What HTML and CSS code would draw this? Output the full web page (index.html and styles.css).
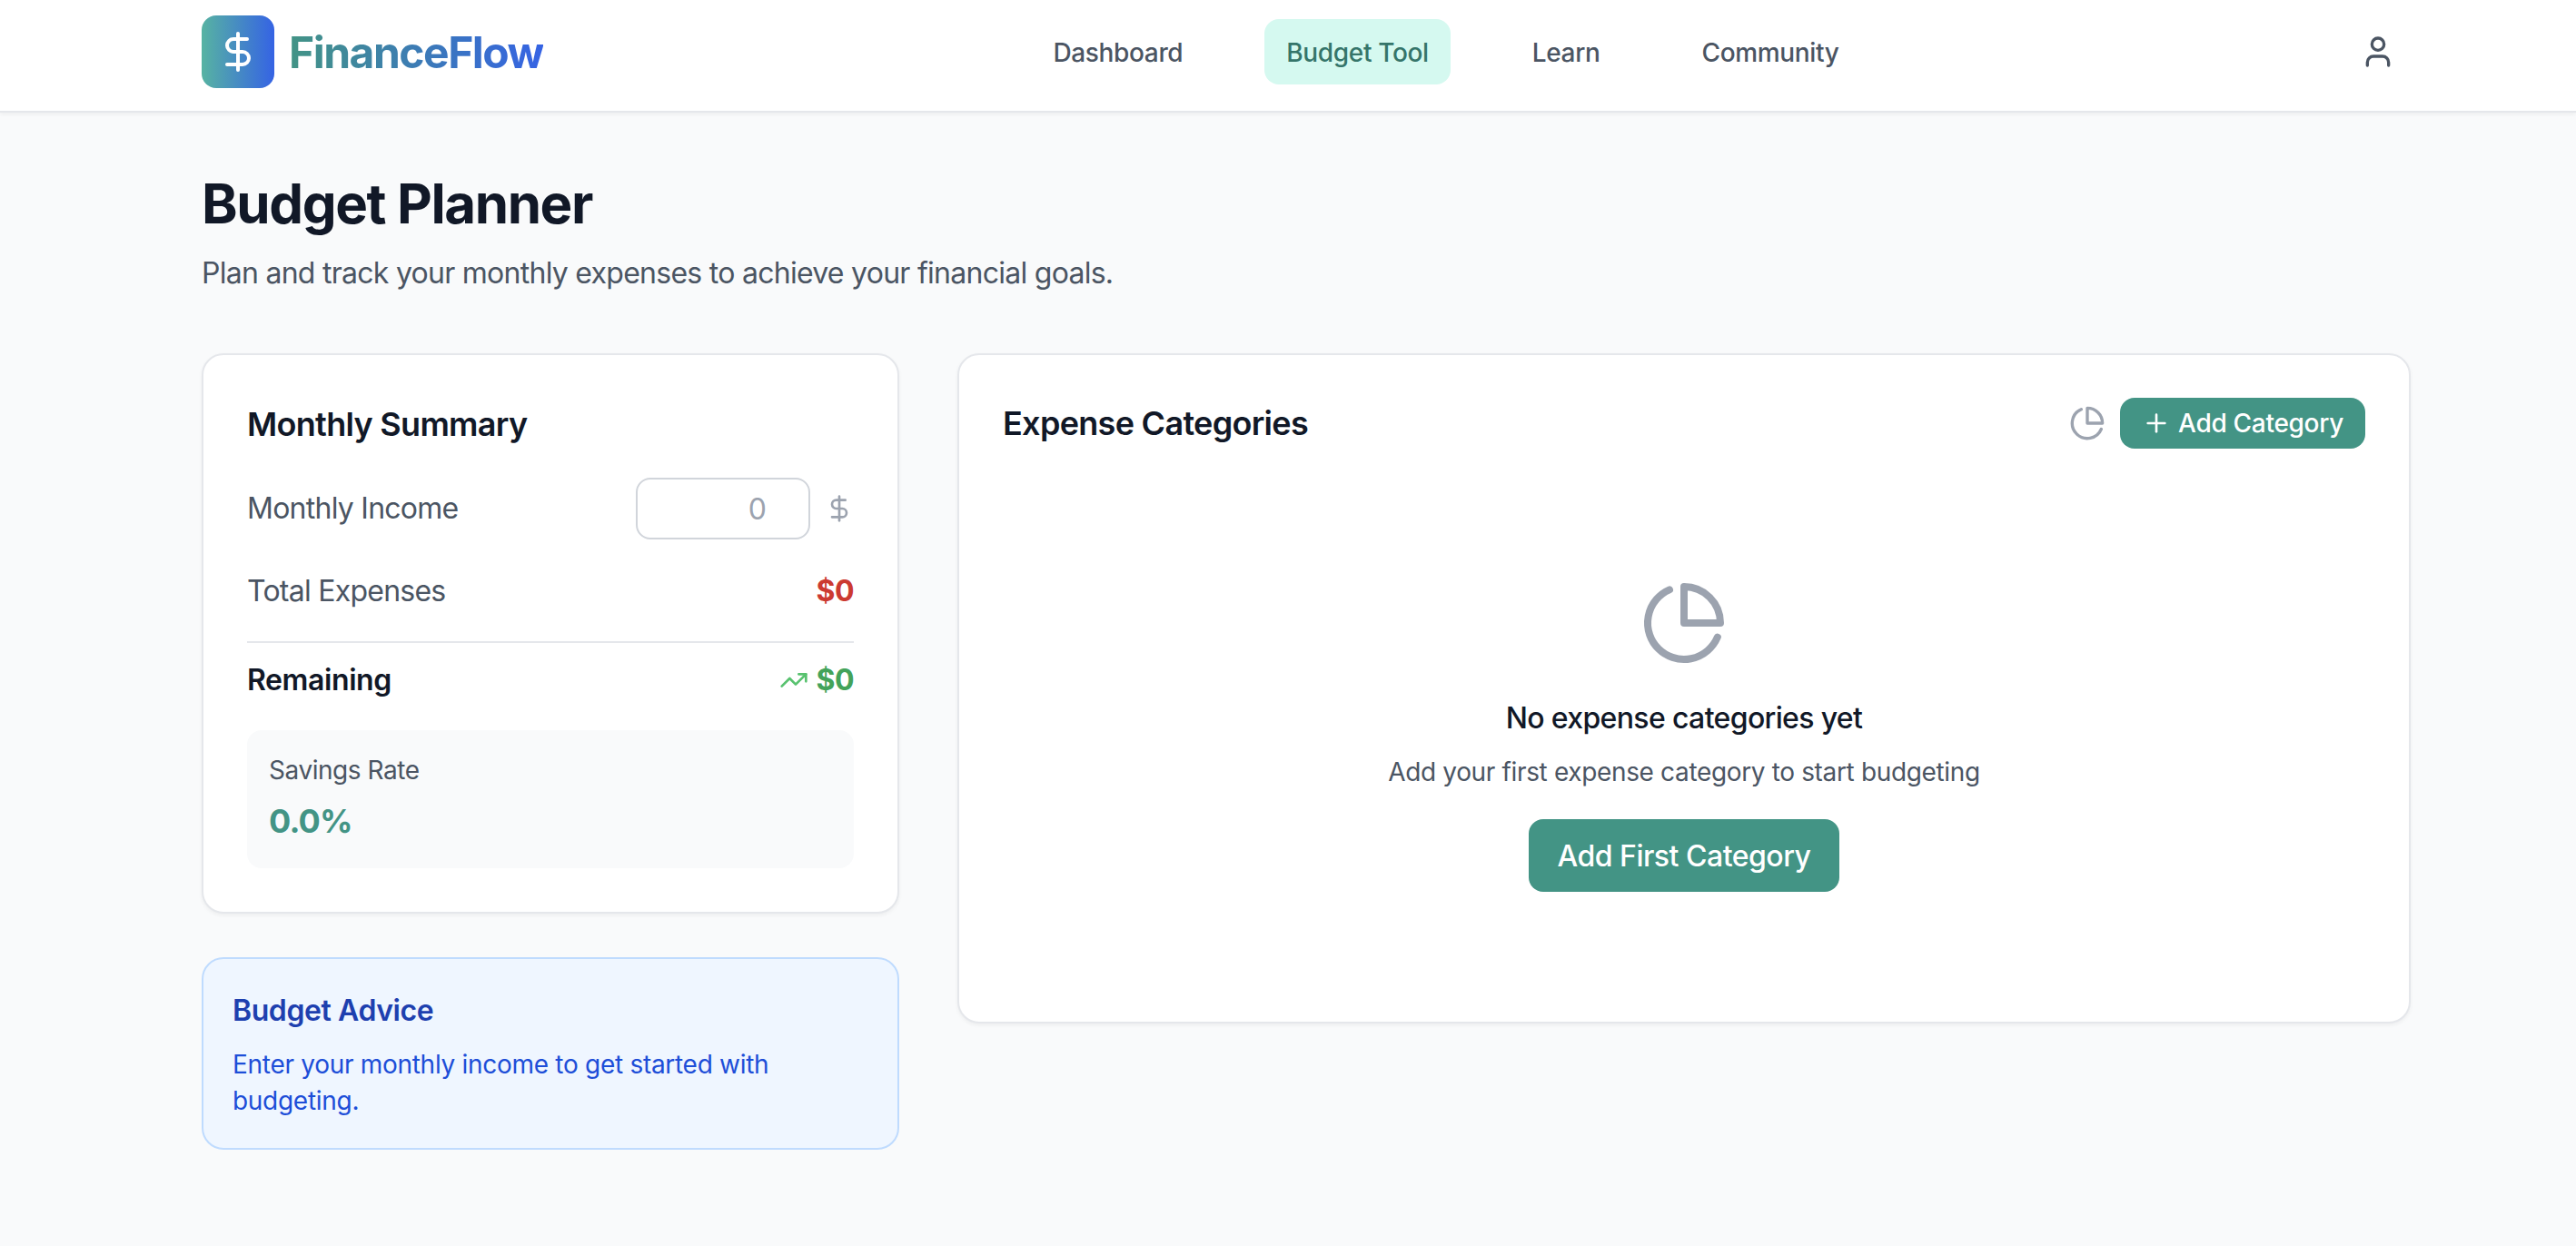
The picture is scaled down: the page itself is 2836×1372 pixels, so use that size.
FILE: index.html
```html
<!DOCTYPE html>
<html lang="en">
<head>
    <meta charset="UTF-8">
    <meta name="viewport" content="width=device-width, initial-scale=1.0">
    <title>Budget Planner</title>
    <link rel="stylesheet" href="styles.css">
</head>
<body>
    <header class="site-header">
        <a class="brand" href="#">
            <span class="brand-mark">
                <svg class="icon" width="48" height="48" viewBox="0 0 24 24"><line x1="12" y1="2" x2="12" y2="22"/><path d="M17 5H9.5a3.5 3.5 0 0 0 0 7h5a3.5 3.5 0 0 1 0 7H6"/></svg>
            </span>
            <span class="brand-name">FinanceFlow</span>
        </a>
        <nav class="main-nav">
            <a href="#">Dashboard</a>
            <a href="#" class="active">Budget Tool</a>
            <a href="#">Learn</a>
            <a href="#">Community</a>
        </nav>
        <button class="user-button" type="button" aria-label="Account">
            <svg class="icon" width="40" height="40" viewBox="0 0 24 24"><path d="M19 21v-2a4 4 0 0 0-4-4H9a4 4 0 0 0-4 4v2"/><circle cx="12" cy="7" r="4"/></svg>
        </button>
    </header>

    <main class="page">
        <h1>Budget Planner</h1>
        <p class="page-intro">Plan and track your monthly expenses to achieve your financial goals.</p>

        <div class="planner-grid">
            <div class="side-column">
                <section class="card summary-card">
                    <h2>Monthly Summary</h2>
                    <div class="row income-row">
                        <label for="income">Monthly Income</label>
                        <div class="income-field">
                            <input type="text" id="income" placeholder="0">
                            <svg class="icon" width="32" height="32" viewBox="0 0 24 24"><line x1="12" y1="2" x2="12" y2="22"/><path d="M17 5H9.5a3.5 3.5 0 0 0 0 7h5a3.5 3.5 0 0 1 0 7H6"/></svg>
                        </div>
                    </div>
                    <div class="row expenses-row">
                        <span>Total Expenses</span>
                        <strong class="amount-red">$0</strong>
                    </div>
                    <div class="row remaining-row">
                        <span>Remaining</span>
                        <strong class="amount-green">
                            <svg class="icon" width="32" height="32" viewBox="0 0 24 24"><polyline points="22 7 13.5 15.5 8.5 10.5 2 17"/><polyline points="16 7 22 7 22 13"/></svg>
                            $0
                        </strong>
                    </div>
                    <div class="savings-box">
                        <div class="savings-label">Savings Rate</div>
                        <div class="savings-value">0.0%</div>
                    </div>
                </section>

                <section class="advice-card">
                    <h3>Budget Advice</h3>
                    <p>Enter your monthly income to get started with budgeting.</p>
                </section>
            </div>

            <section class="card categories-card">
                <div class="categories-header">
                    <h2>Expense Categories</h2>
                    <div class="categories-actions">
                        <svg class="icon pie-small" width="40" height="40" viewBox="0 0 24 24"><path d="M21.21 15.89A10 10 0 1 1 8 2.83"/><path d="M22 12A10 10 0 0 0 12 2v10z"/></svg>
                        <button class="btn btn-small" type="button">
                            <svg class="icon" width="32" height="32" viewBox="0 0 24 24"><line x1="12" y1="5" x2="12" y2="19"/><line x1="5" y1="12" x2="19" y2="12"/></svg>
                            Add Category
                        </button>
                    </div>
                </div>
                <div class="empty-state">
                    <svg class="icon" width="96" height="96" viewBox="0 0 24 24"><path d="M21.21 15.89A10 10 0 1 1 8 2.83"/><path d="M22 12A10 10 0 0 0 12 2v10z"/></svg>
                    <h4>No expense categories yet</h4>
                    <p>Add your first expense category to start budgeting</p>
                    <button class="btn btn-large" type="button">Add First Category</button>
                </div>
            </section>
        </div>
    </main>
</body>
</html>
```

FILE: styles.css
```css
* {
    box-sizing: border-box;
}
body {
    font-family: Inter, "Noto Sans", sans-serif;
    background-color: #f9fafb;
    color: #111827;
    margin: 0;
}
h1, h2, h3, h4, p {
    margin: 0;
}
a {
    text-decoration: none;
}
.icon {
    fill: none;
    stroke: currentColor;
    stroke-width: 2;
    stroke-linecap: round;
    stroke-linejoin: round;
    flex: none;
    display: block;
}

/* header */
.site-header {
    display: flex;
    justify-content: space-between;
    align-items: center;
    height: 124px;
    padding: 0 182px 8px 222px;
    background-color: #fff;
    border-bottom: 2px solid #e5e7eb;
    box-shadow: 0 2px 4px rgba(0, 0, 0, 0.05);
}
.brand {
    display: flex;
    align-items: center;
    gap: 16px;
}
.brand-mark {
    width: 80px;
    height: 80px;
    display: flex;
    align-items: center;
    justify-content: center;
    color: #fff;
    border-radius: 16px;
    background: linear-gradient(to right, #57b3a2, #3563e4);
}
.brand-name {
    padding-top: 2px;
    font-size: 48px;
    line-height: 64px;
    font-weight: 700;
    letter-spacing: -1.5px;
    color: transparent;
    background: linear-gradient(to right, #439485, #3563e4);
    -webkit-background-clip: text;
    background-clip: text;
}
.main-nav {
    display: flex;
    gap: 64px;
    margin-left: 4px;
}
.main-nav a {
    padding: 17px 24px 15px;
    font-size: 28px;
    line-height: 40px;
    font-weight: 500;
    letter-spacing: -0.35px;
    color: #4b5563;
    border-radius: 16px;
}
.main-nav a.active {
    margin: 0 2px;
    background-color: #d5f9f0;
    color: #35756a;
}
.user-button {
    padding: 16px;
    border: none;
    background: none;
    color: #4b5563;
}

/* page */
.page {
    padding: 64px 182px 64px 222px;
}
h1 {
    font-size: 60px;
    line-height: 72px;
    font-weight: 700;
    letter-spacing: -1.4px;
}
.page-intro {
    margin-top: 17px;
    font-size: 32px;
    line-height: 48px;
    letter-spacing: -0.73px;
    color: #4b5563;
}
.planner-grid {
    display: grid;
    grid-template-columns: 768px 1fr;
    gap: 64px;
    align-items: start;
    margin-top: 64px;
}
.side-column {
    display: flex;
    flex-direction: column;
    gap: 48px;
}
.card {
    background-color: #fff;
    border: 2px solid #e5e7eb;
    border-radius: 24px;
    padding: 48px;
    box-shadow: 0 2px 4px rgba(0, 0, 0, 0.05);
}
h2 {
    font-size: 36px;
    line-height: 56px;
    font-weight: 600;
    letter-spacing: -0.7px;
}

/* monthly summary */
.row {
    display: flex;
    justify-content: space-between;
    align-items: center;
    font-size: 32px;
    line-height: 48px;
    letter-spacing: -0.75px;
    color: #4b5563;
}
.income-row {
    margin-top: 31px;
}
.income-field {
    display: flex;
    align-items: center;
    gap: 16px;
    color: #9ca3af;
}
.income-field input {
    width: 192px;
    height: 68px;
    padding: 0 46px 0 16px;
    border: 2px solid #d1d5db;
    border-radius: 16px;
    font: inherit;
    text-align: right;
    background: #fff;
}
.income-field input::placeholder {
    color: #9ca3af;
    opacity: 1;
}
.expenses-row {
    margin-top: 33px;
}
.amount-red {
    color: #cc3a31;
    font-weight: 700;
    letter-spacing: -0.5px;
}
.remaining-row {
    margin-top: 31px;
    padding-top: 17px;
    border-top: 2px solid #e5e7eb;
    color: #111827;
    font-weight: 600;
    letter-spacing: -0.4px;
}
.amount-green {
    display: flex;
    align-items: center;
    gap: 8px;
    color: #43a35a;
    font-weight: 700;
    letter-spacing: -0.5px;
}
.amount-green .icon {
    color: #58c26f;
}
.savings-box {
    margin-top: 31px;
    padding: 24px;
    background-color: #f9fafb;
    border-radius: 16px;
}
.savings-label {
    font-size: 28px;
    line-height: 40px;
    letter-spacing: -0.45px;
    color: #4b5563;
}
.savings-value {
    margin-top: 8px;
    font-size: 36px;
    line-height: 56px;
    font-weight: 700;
    letter-spacing: -0.8px;
    color: #439485;
}

/* advice */
.advice-card {
    padding: 32px;
    background-color: #eff6ff;
    border: 2px solid #bfdbfe;
    border-radius: 24px;
}
.advice-card h3 {
    margin-top: 1px;
    font-size: 32px;
    line-height: 48px;
    font-weight: 600;
    letter-spacing: -0.42px;
    color: #1e40af;
}
.advice-card p {
    margin-top: 15px;
    font-size: 28px;
    line-height: 40px;
    letter-spacing: -0.29px;
    color: #1d4ed8;
}

/* expense categories */
.categories-header {
    display: flex;
    justify-content: space-between;
    align-items: center;
    height: 54px;
}
.categories-actions {
    display: flex;
    align-items: center;
    gap: 16px;
}
.pie-small {
    color: #9ca3af;
}
.btn {
    display: inline-flex;
    align-items: center;
    border: none;
    background-color: #439485;
    color: #fff;
    font-family: inherit;
    font-weight: 500;
    cursor: pointer;
}
.btn:hover {
    background-color: #35756a;
}
.btn-small {
    gap: 8px;
    height: 56px;
    padding: 0 24px;
    font-size: 28px;
    letter-spacing: -0.3px;
    border-radius: 16px;
}
.btn-large {
    height: 80px;
    margin-top: 32px;
    padding: 0 32px;
    font-size: 32px;
    letter-spacing: -0.5px;
    border-radius: 16px;
}
.empty-state {
    display: flex;
    flex-direction: column;
    align-items: center;
    margin-top: 49px;
    padding: 96px 0 95px;
    color: #9ca3af;
}
.empty-state h4 {
    margin-top: 33px;
    font-size: 32px;
    line-height: 48px;
    font-weight: 500;
    letter-spacing: -0.65px;
    color: #111827;
}
.empty-state p {
    margin-top: 15px;
    font-size: 28px;
    line-height: 40px;
    letter-spacing: -0.35px;
    color: #4b5563;
}
```
